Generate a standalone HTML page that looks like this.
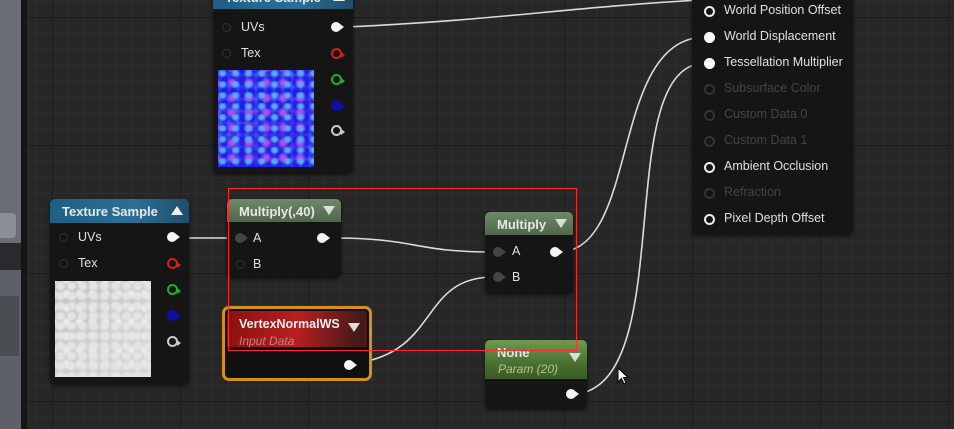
<!DOCTYPE html>
<html><head><style>
body{margin:0;width:954px;height:429px;overflow:hidden;position:relative;font-family:"Liberation Sans",sans-serif;
background-color:#272727;
background-image:
linear-gradient(90deg,#1d1d1d 1px,transparent 1px),
linear-gradient(0deg,#1d1d1d 1px,transparent 1px),
linear-gradient(90deg,#2e2e2e 1px,transparent 1px),
linear-gradient(0deg,#2e2e2e 1px,transparent 1px);
background-size:128px 128px,128px 128px,16px 16px,16px 16px;
background-position:52px 0,0 18px,4px 0,0 2px;}
.n{position:absolute;background:#151515;border-radius:5px;box-shadow:0 2px 4px rgba(0,0,0,.6);}
.h{position:absolute;left:0;right:0;top:0;border-radius:5px 5px 0 0;color:#e8e8e8;font-weight:bold;font-size:13px;padding:5px 0 0 12px;box-sizing:border-box;}
.blue{background:linear-gradient(90deg,#1f5f85,#2c6f96 60%,#1d4e6b);}
.gg{background:linear-gradient(180deg,#6e8a66,#50664b);}
.t{position:absolute;color:#e0e0e0;font-size:12.5px;}
.d{color:#444}
.pi{position:absolute;width:9px;height:9px;border-radius:50%;border:1.5px solid #333;box-sizing:border-box;}
.po{position:absolute;width:10px;height:10px;border-radius:50%;background:#f4f4f4;color:#f4f4f4}
.po:after,.oc:after{content:"";position:absolute;left:9px;top:2px;border-left:4px solid currentColor;border-top:3px solid transparent;border-bottom:3px solid transparent;}
.oc{position:absolute;width:11px;height:11px;border-radius:50%;border:2px solid;box-sizing:border-box;}
.oc:after{left:8px;top:1.5px}
.tri{position:absolute;width:0;height:0;border-left:6px solid transparent;border-right:6px solid transparent;}
.ob{position:absolute;width:11px;height:11px;border-radius:50%;border:2px solid;box-sizing:border-box;}
</style></head><body>
<div style="position:absolute;left:0;top:0;width:21px;height:429px;background:#5d6167"></div>
<div style="position:absolute;left:0;top:0;width:21px;height:243px;background:#6a6e74"></div>
<div style="position:absolute;left:0;top:213px;width:16px;height:25px;background:#8a8e95;border-radius:0 4px 4px 0"></div>
<div style="position:absolute;left:0;top:243px;width:21px;height:27px;background:#2a2a2c"></div>
<div style="position:absolute;left:0;top:296px;width:19px;height:60px;background:#4a4d52"></div>
<div style="position:absolute;left:21px;top:0;width:6px;height:429px;background:#151515"></div>

<svg style="position:absolute;left:0;top:0" width="954" height="429">
<g fill="none" stroke="#dcdcdc" stroke-width="1.6">
<path d="M345 27 C500 20,560 8,700 0"/>
<path d="M180 238 L236 238"/>
<path d="M330 238 C420 238,410 252,494 252"/>
<path d="M358 363 C440 350,420 277,494 277"/>
<path d="M562 252 C640 245,610 37,706 37"/>
<path d="M577 394 C680 380,610 63,706 63"/>
</g>
</svg>

<div class="n" style="left:213px;top:-10px;width:140px;height:183px">
<div class="h blue" style="height:19px;padding-top:0">Texture Sample<div class="tri" style="right:8px;top:2px;border-bottom:9px solid #eee"></div></div>
<div class="pi" style="left:9px;top:33px"></div><div class="t" style="left:28px;top:30px">UVs</div>
<div class="po" style="left:118px;top:32px"></div>
<div class="pi" style="left:9px;top:59px"></div><div class="t" style="left:28px;top:56px">Tex</div>
<div class="oc" style="left:118px;top:58px;color:#d02020;border-color:#d02020"></div>
<div class="oc" style="left:118px;top:84px;color:#20b020;border-color:#20b020"></div>
<div class="oc" style="left:118px;top:110px;color:#1010a0;border-color:#1010a0;background:#1010a0"></div>
<div class="oc" style="left:118px;top:135px;color:#ccc;border-color:#ccc"></div>
<div style="position:absolute;left:5px;top:80px;width:96px;height:97px;background:radial-gradient(ellipse at 35% 30%,#5aa8ff 0 2px,transparent 5px),radial-gradient(ellipse at 60% 65%,#b050e8 0 2px,transparent 6px),radial-gradient(ellipse at 50% 50%,#2020e8 0 3px,transparent 6px),linear-gradient(135deg,#3a3cf0,#4a60f0 40%,#5030e0 70%,#4a7cff);background-size:13px 11px,17px 15px,9px 12px,100% 100%;background-position:0 0,4px 3px,2px 5px,0 0"></div>
</div>

<div class="n" style="left:50px;top:199px;width:139px;height:185px">
<div class="h blue" style="height:24px">Texture Sample<div class="tri" style="right:6px;top:7px;border-bottom:9px solid #eee"></div></div>
<div class="pi" style="left:9px;top:34px"></div><div class="t" style="left:28px;top:31px">UVs</div>
<div class="po" style="left:117px;top:33px"></div>
<div class="pi" style="left:9px;top:60px"></div><div class="t" style="left:28px;top:57px">Tex</div>
<div class="oc" style="left:117px;top:59px;color:#d02020;border-color:#d02020"></div>
<div class="oc" style="left:117px;top:85px;color:#20b020;border-color:#20b020"></div>
<div class="oc" style="left:117px;top:111px;color:#1010a0;border-color:#1010a0;background:#1010a0"></div>
<div class="oc" style="left:117px;top:137px;color:#ccc;border-color:#ccc"></div>
<div style="position:absolute;left:5px;top:82px;width:96px;height:96px;background:radial-gradient(ellipse,#e4e4e4 0 3px,transparent 6px),radial-gradient(ellipse,#ececec 0 2px,transparent 5px),linear-gradient(135deg,#c4c4c4,#d8d8d8);background-size:11px 10px,13px 14px,100% 100%;background-position:0 0,5px 6px,0 0"></div>
</div>

<div class="n" style="left:227px;top:199px;width:114px;height:78px">
<div class="h gg" style="height:23px">Multiply(,40)<div class="tri" style="right:6px;top:7px;border-top:9px solid #ddd"></div></div>
<div class="po" style="left:8px;top:34px;background:#444;color:#444"></div><div class="t" style="left:26px;top:32px">A</div>
<div class="po" style="left:90px;top:34px"></div>
<div class="pi" style="left:9px;top:61px"></div><div class="t" style="left:26px;top:58px">B</div>
</div>

<div style="position:absolute;left:222px;top:306px;width:150px;height:75px;border:3px solid #d4901c;border-radius:7px;box-sizing:border-box;background:#101010">
<div style="position:absolute;left:2px;top:2px;right:2px;height:36px;border-radius:4px 4px 0 0;background:linear-gradient(100deg,#8a1010,#b82020 50%,#4a1a1a 90%)"></div>
<div class="t" style="left:14px;top:8px;font-weight:bold;color:#eee">VertexNormalWS</div>
<div class="t" style="left:14px;top:25px;font-style:italic;color:#c88080;font-size:12px">Input Data</div>
<div class="tri" style="right:9px;top:14px;border-top:9px solid #ddd"></div>
<div class="po" style="left:119px;top:51px"></div>
</div>

<div class="n" style="left:485px;top:212px;width:88px;height:81px">
<div class="h gg" style="height:23px">Multiply<div class="tri" style="right:6px;top:7px;border-top:9px solid #ddd"></div></div>
<div class="po" style="left:8px;top:35px;background:#444;color:#444"></div><div class="t" style="left:27px;top:32px">A</div>
<div class="po" style="left:65px;top:35px"></div>
<div class="po" style="left:8px;top:60px;background:#444;color:#444"></div><div class="t" style="left:27px;top:58px">B</div>
</div>

<div class="n" style="left:485px;top:340px;width:102px;height:68px">
<div class="h" style="height:39px;background:linear-gradient(180deg,#6e9a50,#4a7030 60%,#3a5a28)">None</div>
<div class="t" style="left:13px;top:22px;font-style:italic;color:#a8c890;font-size:12px">Param (20)</div>
<div class="tri" style="right:6px;top:13px;border-top:9px solid #ddd"></div>
<div class="po" style="left:81px;top:49px"></div>
</div>

<div class="n" style="left:692px;top:-10px;width:161px;height:244px">
<div class="ob" style="left:12px;top:16px;border-color:#eee"></div><div class="t" style="left:32px;top:13px">World Position Offset</div>
<div class="ob" style="left:12px;top:42px;border-color:#fff;background:#fff"></div><div class="t" style="left:32px;top:39px">World Displacement</div>
<div class="ob" style="left:12px;top:68px;border-color:#fff;background:#fff"></div><div class="t" style="left:32px;top:65px">Tessellation Multiplier</div>
<div class="ob" style="left:12px;top:94px;border-color:#333"></div><div class="t d" style="left:32px;top:91px">Subsurface Color</div>
<div class="ob" style="left:12px;top:120px;border-color:#333"></div><div class="t d" style="left:32px;top:117px">Custom Data 0</div>
<div class="ob" style="left:12px;top:146px;border-color:#333"></div><div class="t d" style="left:32px;top:143px">Custom Data 1</div>
<div class="ob" style="left:12px;top:172px;border-color:#eee"></div><div class="t" style="left:32px;top:169px">Ambient Occlusion</div>
<div class="ob" style="left:12px;top:198px;border-color:#333"></div><div class="t d" style="left:32px;top:195px">Refraction</div>
<div class="ob" style="left:12px;top:224px;border-color:#eee"></div><div class="t" style="left:32px;top:221px">Pixel Depth Offset</div>
</div>

<div style="position:absolute;left:228px;top:188px;width:349px;height:163px;border:1px solid #ff2a2a;box-sizing:border-box"></div>
<svg style="position:absolute;left:617px;top:367px" width="14" height="20"><path d="M1 1 L1 15 L4.5 11.5 L7 17 L9 16 L6.5 10.5 L11 10.5 Z" fill="#fff" stroke="#000" stroke-width="1"/></svg>
</body></html>
